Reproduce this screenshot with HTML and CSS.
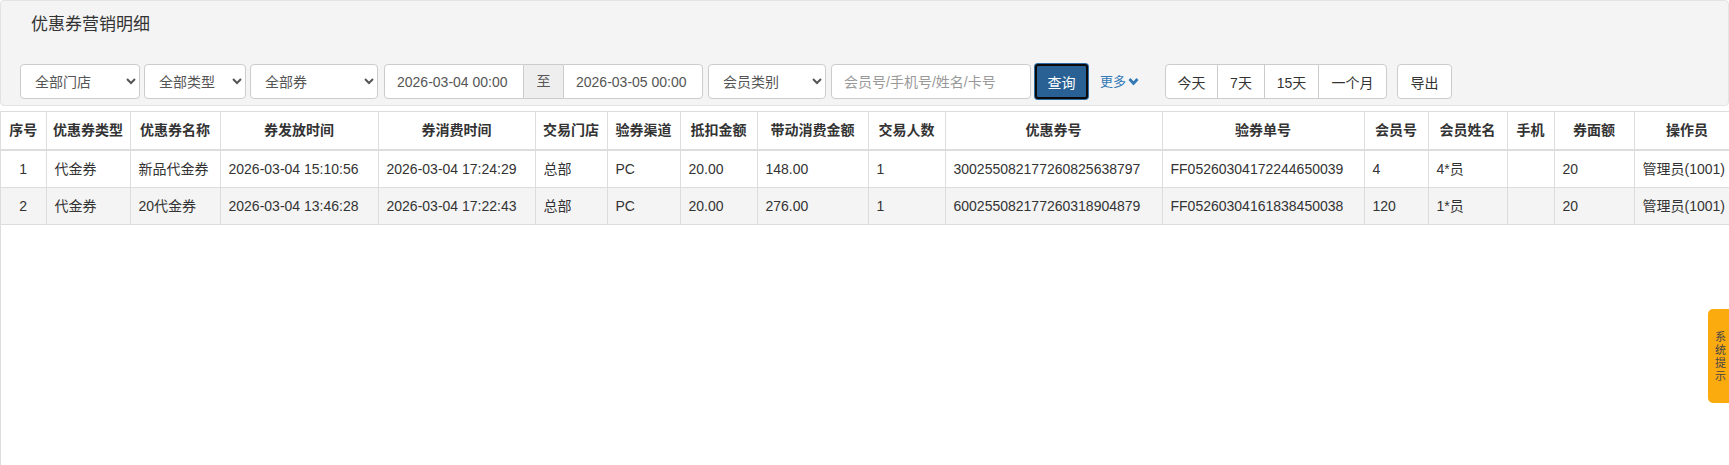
FILE: index.html
```html
<!DOCTYPE html>
<html lang="zh-CN">
<head>
<meta charset="utf-8">
<title>优惠券营销明细</title>
<link rel="stylesheet" href="styles.css">
</head>
<body>
<div class="well">
  <h3 class="title">优惠券营销明细</h3>
  <div class="filters">
    <select class="fc sel-store"><option>全部门店</option></select>
    <select class="fc sel-type"><option>全部类型</option></select>
    <select class="fc sel-coupon"><option>全部券</option></select>
    <div class="date-group">
      <input class="fc date" type="text" value="2026-03-04 00:00">
      <span class="addon">至</span>
      <input class="fc date date2" type="text" value="2026-03-05 00:00">
    </div>
    <select class="fc sel-member"><option>会员类别</option></select>
    <input class="fc search" type="text" placeholder="会员号/手机号/姓名/卡号">
    <button class="btn-query" type="button">查询</button>
    <a class="more" href="#">更多<svg class="chev" width="11" height="9" viewBox="0 0 11 9"><polyline points="1.5,2 5.5,6.5 9.5,2" fill="none" stroke="#337ab7" stroke-width="2.8" stroke-linejoin="miter"/></svg></a>
    <div class="btn-group">
      <button class="bg-btn w1" type="button">今天</button>
      <button class="bg-btn w2" type="button">7天</button>
      <button class="bg-btn w3" type="button">15天</button>
      <button class="bg-btn w4" type="button">一个月</button>
    </div>
    <button class="btn-export" type="button">导出</button>
  </div>
</div>

<div class="table-wrap">
  <table class="grid">
    <colgroup>
      <col class="c45"><col class="c84"><col class="c90"><col class="c158"><col class="c157"><col class="c72"><col class="c73"><col class="c77"><col class="c111"><col class="c77"><col class="c217"><col class="c202"><col class="c64"><col class="c79"><col class="c47"><col class="c80"><col class="c106">
    </colgroup>
    <thead>
      <tr>
        <th>序号</th><th>优惠券类型</th><th>优惠券名称</th><th>券发放时间</th><th>券消费时间</th><th>交易门店</th><th>验券渠道</th><th>抵扣金额</th><th>带动消费金额</th><th>交易人数</th><th>优惠券号</th><th>验券单号</th><th>会员号</th><th>会员姓名</th><th>手机</th><th>券面额</th><th>操作员</th>
      </tr>
    </thead>
    <tbody>
      <tr>
        <td class="center">1</td><td>代金券</td><td>新品代金券</td><td>2026-03-04 15:10:56</td><td>2026-03-04 17:24:29</td><td>总部</td><td>PC</td><td>20.00</td><td>148.00</td><td>1</td><td>300255082177260825638797</td><td>FF05260304172244650039</td><td>4</td><td>4*员</td><td></td><td>20</td><td>管理员(1001)</td>
      </tr>
      <tr class="alt">
        <td class="center">2</td><td>代金券</td><td>20代金券</td><td>2026-03-04 13:46:28</td><td>2026-03-04 17:22:43</td><td>总部</td><td>PC</td><td>20.00</td><td>276.00</td><td>1</td><td>600255082177260318904879</td><td>FF05260304161838450038</td><td>120</td><td>1*员</td><td></td><td>20</td><td>管理员(1001)</td>
      </tr>
    </tbody>
  </table>
</div>

<div class="sys-tip">系<br>统<br>提<br>示</div>
</body>
</html>
```

FILE: styles.css
```css
* { box-sizing: border-box; }
html, body { margin: 0; padding: 0; height: 100%; overflow: hidden; }
body {
  font-family: "Liberation Sans", "Noto Sans CJK SC", sans-serif;
  font-size: 14px;
  line-height: 20px;
  color: #333;
  background: #fff;
}

.well {
  background: #f4f4f4;
  border: 1px solid #e3e3e3;
  border-radius: 4px;
  padding: 0 19px 5px 19px;
  height: 106px;
}
.title {
  margin: 0;
  padding: 12px 0 0 11px;
  height: 63px;
  font-size: 17px;
  font-weight: normal;
  line-height: 24px;
  color: #333;
}

.filters {
  display: flex;
  align-items: center;
  height: 35px;
}
.fc {
  height: 35px;
  border: 1px solid #ccc;
  border-radius: 4px;
  background-color: #fff;
  color: #555;
  font-family: inherit;
  font-size: 14px;
  padding: 6px 12px;
  margin: 0;
}
select.fc { padding: 6px 8px 6px 10px; }
.sel-store { width: 120px; margin-right: 4px; }
.sel-type { width: 102px; margin-right: 4px; }
.sel-coupon { width: 128px; margin-right: 6px; }

.date-group { display: flex; margin-right: 5px; }
.date { width: 140px; border-radius: 4px 0 0 4px; }
.date2 { border-radius: 0 4px 4px 0; }
.addon {
  width: 39px;
  height: 35px;
  background: #eee;
  border-top: 1px solid #ccc;
  border-bottom: 1px solid #ccc;
  color: #555;
  text-align: center;
  line-height: 33px;
}
.sel-member { width: 118px; margin-right: 5px; }
.search { width: 200px; margin-right: 4px; }
.search::placeholder { color: #999; }

.btn-query {
  width: 53px;
  height: 35px;
  background: #2a6194;
  color: #fff;
  border: 2px solid #0a0a0a;
  box-shadow: 0 0 0 1px #2e6da4;
  border-radius: 3px;
  font-family: inherit;
  font-size: 14px;
  padding: 0;
  margin-right: 12px;
}
.more {
  color: #337ab7;
  text-decoration: none;
  font-size: 13px;
  display: flex;
  align-items: center;
  margin-right: 26px;
}
.chev { margin-left: 2px; }

.btn-group { display: flex; margin-right: 10px; }
.bg-btn, .btn-export {
  height: 35px;
  background: #fff;
  border: 1px solid #ccc;
  color: #333;
  font-family: inherit;
  font-size: 14px;
  padding: 0;
  margin: 0;
}
.bg-btn { border-radius: 0; margin-left: -1px; }
.bg-btn.w1 { width: 53px; border-radius: 4px 0 0 4px; margin-left: 0; }
.bg-btn.w2 { width: 48px; }
.bg-btn.w3 { width: 55px; }
.bg-btn.w4 { width: 69px; border-radius: 0 4px 4px 0; }
.btn-export { width: 55px; border-radius: 4px; }

.table-wrap {
  margin-top: 5px;
  border-left: 1px solid #ddd;
  height: calc(100vh - 111px);
  overflow: hidden;
  width: 100%;
}
.grid {
  border-collapse: collapse;
  table-layout: fixed;
  width: 1739px;
}
.c45 { width: 45px; } .c84 { width: 84px; } .c90 { width: 90px; }
.c158 { width: 158px; } .c157 { width: 157px; } .c72 { width: 72px; }
.c73 { width: 73px; } .c77 { width: 77px; } .c111 { width: 111px; }
.c217 { width: 217px; } .c202 { width: 202px; } .c64 { width: 64px; }
.c79 { width: 79px; } .c47 { width: 47px; } .c80 { width: 80px; }
.c106 { width: 106px; }

.grid th, .grid td {
  border: 1px solid #ddd;
  padding: 8px;
  white-space: nowrap;
  overflow: hidden;
}
.grid th {
  font-weight: bold;
  text-align: center;
  border-bottom: 2px solid #ddd;
  height: 38px;
  padding: 8px 2px;
}
.grid td { text-align: left; height: 37px; }
.grid td.center { text-align: center; }
.grid th:first-child, .grid td:first-child { border-left: none; }
.grid tr.alt td { background: #f4f4f4; }

.sys-tip {
  position: fixed;
  right: 0;
  top: 309px;
  width: 21px;
  height: 94px;
  background: #fcab0f;
  border-radius: 5px 0 0 5px;
  color: #444;
  font-size: 11px;
  line-height: 13px;
  padding: 22px 0 0 4px;
  text-align: center;
}
```
